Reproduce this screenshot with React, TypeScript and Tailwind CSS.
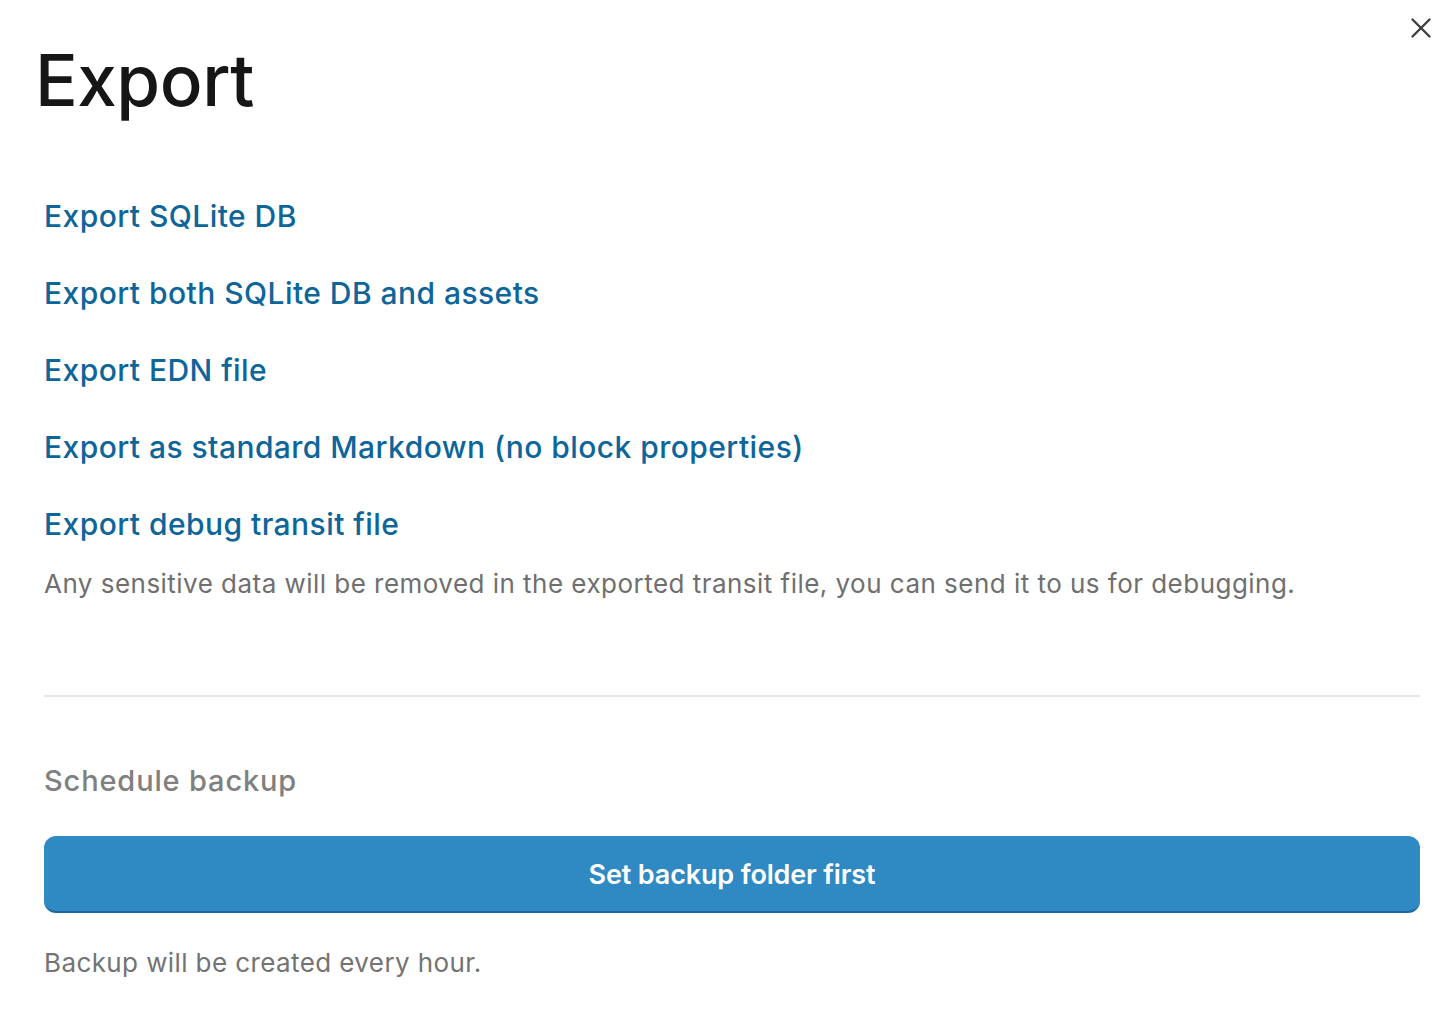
import { X } from 'lucide-react';

const links = [
  'Export SQLite DB',
  'Export both SQLite DB and assets',
  'Export EDN file',
  'Export as standard Markdown (no block properties)',
];

const App = () => {
  return (
    <div className="relative min-h-screen bg-white font-['Inter',sans-serif] text-[#1a1a1a]">
      <button className="absolute right-[18px] top-[11px] text-[#3f3f3f]">
        <X size={34} strokeWidth={1.7} />
      </button>

      <div className="pl-[44px] pr-[36px]">
        <h1 className="-ml-[9px] pt-[34px] text-[71px] font-medium leading-[92px] tracking-[-0.5px] text-[#161616]">
          Export
        </h1>

        <div className="mt-[69px] flex flex-col gap-[34px]">
          {links.map((label) => (
            <a key={label} className="block cursor-pointer text-[30px] font-medium leading-[43px] tracking-[0.45px] text-[#0d6599]">
              {label}
            </a>
          ))}
          <div>
            <a className="block cursor-pointer text-[30px] font-medium leading-[43px] tracking-[0.45px] text-[#0d6599]">
              Export debug transit file
            </a>
            <p className="mt-[18px] text-[26px] leading-[40px] tracking-[0.47px] text-[#6f6f6f]">
              Any sensitive data will be removed in the exported transit file, you can send it to us for debugging.
            </p>
          </div>
        </div>

        <div className="mt-[91px] border-t-2 border-[#e6e6e6]" />

        <h2 className="mt-[62px] text-[29px] font-medium leading-[44px] tracking-[0.85px] text-[#808080]">Schedule backup</h2>

        <button className="mt-[33px] flex h-[77px] w-full items-center justify-center rounded-[12px] border-b-2 border-[#1b65a0] bg-[#2f89c2] pt-[4px] text-[27px] font-semibold tracking-[-0.15px] text-white">
          Set backup folder first
        </button>

        <p className="mt-[30px] text-[26px] leading-[40px] tracking-[0.4px] text-[#737373]">Backup will be created every hour.</p>
      </div>
    </div>
  );
};

export default App;
